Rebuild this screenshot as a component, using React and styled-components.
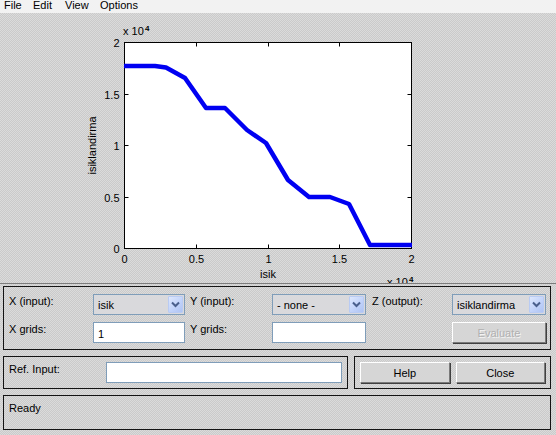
import React from "react";
import styled, { createGlobalStyle } from "styled-components";

const dither = "repeating-conic-gradient(#cacaca 0 25%, #dbdbdb 0 50%) 0 0 / 2px 2px";

const GlobalStyle = createGlobalStyle`
  html, body {
    margin: 0;
    padding: 0;
  }
  body {
    width: 556px;
    height: 435px;
    overflow: hidden;
    background: ${dither};
    font-family: "Liberation Sans", Arial, sans-serif;
    font-size: 11px;
    color: #000;
  }
`;

const Window = styled.div`
  width: 556px;
  height: 435px;
  display: flex;
  flex-direction: column;
  background: ${dither};
`;

const MenuBar = styled.div`
  height: 13px;
  flex: 0 0 13px;
  display: flex;
  align-items: flex-start;
  padding-left: 4px;
  background: #f2f2f2;
  line-height: 10px;
  overflow: hidden;
`;

const MenuItem = styled.span`
  width: ${(p) => (p.$w ? `${p.$w}px` : "auto")};
  white-space: nowrap;
`;

const PlotArea = styled.div`
  height: 270px;
  flex: 0 0 270px;
  overflow: hidden;
  svg {
    display: block;
  }
`;

const Divider = styled.div`
  height: 1px;
  flex: 0 0 1px;
  background: #7c7c7c;
  margin-bottom: 2px;
`;

const Frame = styled.div`
  border: 1px solid #141414;
  box-sizing: border-box;
`;

const ControlsFrame = styled(Frame)`
  margin: 0 5px 0 3px;
  display: grid;
  grid-template-columns: 89px 92px 87px 94px 86px 94px;
  grid-auto-rows: 21px;
  row-gap: 7px;
  padding: 7px 4px 6px 0;
`;

const Label = styled.div`
  padding-left: ${(p) => p.$pad ?? 5}px;
  line-height: 13px;
  padding-top: 1px;
  white-space: nowrap;
`;

const Select = styled.div`
  box-sizing: border-box;
  border: 1px solid #7f9db9;
  background: #d9d9dc;
  display: flex;
  align-items: center;
  padding: 1px;
`;

const SelectText = styled.span`
  flex: 1;
  padding-left: 3px;
  padding-top: 1px;
  white-space: nowrap;
  overflow: hidden;
`;

const ArrowButton = styled.span`
  width: 15px;
  height: 17px;
  box-sizing: border-box;
  border: 1px solid #b9cbf3;
  border-radius: 1px;
  background: linear-gradient(135deg, #dde7fd 0%, #c2d3fa 55%, #aec3f3 100%);
  display: flex;
  align-items: center;
  justify-content: center;
`;

const TextBox = styled.div`
  box-sizing: border-box;
  border: 1px solid #7f9db9;
  background: #ffffff;
  display: flex;
  align-items: center;
  padding: 2px 0 0 4px;
`;

const PushButton = styled.div`
  box-sizing: border-box;
  height: 21px;
  flex: ${(p) => (p.$grow ? 1 : "none")};
  display: flex;
  align-items: center;
  justify-content: center;
  background: #d6d6d6;
  border-top: 1px solid #ffffff;
  border-left: 1px solid #ffffff;
  border-right: 1px solid #7a7a7a;
  border-bottom: 1px solid #7a7a7a;
  box-shadow: 1px 1px 0 #404040;
  color: ${(p) => (p.$disabled ? "#b0b0b0" : "#000")};
  text-shadow: ${(p) => (p.$disabled ? "1px 1px 0 #f4f4f4" : "none")};
`;

const BottomRow = styled.div`
  display: flex;
  gap: 6px;
  margin: 6px 5px 0 3px;
`;

const RefFrame = styled(Frame)`
  width: 345px;
  flex: 0 0 345px;
  display: flex;
  padding: 5px 5px 5px 0;
`;

const RefLabel = styled.div`
  width: 102px;
  flex: 0 0 102px;
  padding-left: 5px;
  box-sizing: border-box;
  line-height: 13px;
  padding-top: 1px;
`;

const RefInput = styled(TextBox)`
  flex: 1;
  height: 21px;
`;

const ButtonFrame = styled(Frame)`
  flex: 1;
  display: flex;
  gap: 6px;
  padding: 5px 5px 5px 5px;
`;

const StatusFrame = styled(Frame)`
  height: 35px;
  margin: 6px 5px 0 3px;
  padding: 6px 5px;
  line-height: 13px;
`;

function Chevron() {
  return (
    <svg width="9" height="7" viewBox="0 0 9 7">
      <path d="M1 1.5 L4.5 5 L8 1.5" fill="none" stroke="#4a5f8c" strokeWidth="2" />
    </svg>
  );
}

function Dropdown({ value }) {
  return (
    <Select>
      <SelectText>{value}</SelectText>
      <ArrowButton>
        <Chevron />
      </ArrowButton>
    </Select>
  );
}

const X0 = 124.5;
const X1 = 411.5;
const Y0 = 248.5;
const Y1 = 42.5;
const ticks = [0, 0.5, 1, 1.5, 2];
const snap = (v) => Math.round(v - 0.5) + 0.5;
const xs = ticks.map((v) => snap(X0 + (v / 2) * (X1 - X0)));
const ys = ticks.map((v) => snap(Y0 - (v / 2) * (Y0 - Y1)));

const linePts = [
  [124, 66],
  [155, 66],
  [166, 67.5],
  [185, 78],
  [206, 108],
  [225, 108],
  [247, 130],
  [266, 143],
  [288, 180],
  [309, 197],
  [330, 197],
  [349, 204],
  [370, 245],
  [412, 245],
];

function Chart() {
  const font = { fontFamily: '"Liberation Sans", Arial, sans-serif', fontSize: 11 };
  return (
    <svg width="556" height="270" viewBox="0 0 556 270">
      <g transform="translate(0,-13)">
        <rect x={X0} y={Y1} width={X1 - X0} height={Y0 - Y1} fill="#fff" stroke="#000" strokeWidth="1" />
        {xs.map((x, i) => (
          <g key={`x${i}`}>
            <line x1={x} y1={Y0} x2={x} y2={Y0 - 4} stroke="#000" />
            <line x1={x} y1={Y1} x2={x} y2={Y1 + 4} stroke="#000" />
            <text x={x} y={263} textAnchor="middle" {...font}>
              {ticks[i]}
            </text>
          </g>
        ))}
        {ys.map((y, i) => (
          <g key={`y${i}`}>
            <line x1={X0} y1={y} x2={X0 + 4} y2={y} stroke="#000" />
            <line x1={X1} y1={y} x2={X1 - 4} y2={y} stroke="#000" />
            <text x={119.5} y={y + 4} textAnchor="end" {...font}>
              {ticks[i]}
            </text>
          </g>
        ))}
        <polyline
          points={linePts.map((p) => p.join(",")).join(" ")}
          fill="none"
          stroke="#0000f2"
          strokeWidth="4.5"
          strokeLinejoin="round"
        />
        <text x={123} y={35} {...font}>
          x 10
        </text>
        <text x={145} y={31} fontFamily='"Liberation Sans", Arial, sans-serif' fontSize="8" fontWeight="bold">
          4
        </text>
        <text x={387} y={286} {...font}>
          x 10
        </text>
        <text x={409} y={282} fontFamily='"Liberation Sans", Arial, sans-serif' fontSize="8" fontWeight="bold">
          4
        </text>
        <text x={268} y={278} textAnchor="middle" {...font}>
          isik
        </text>
        <text x={96} y={145.5} textAnchor="middle" transform="rotate(-90 96 145.5)" {...font}>
          isiklandirma
        </text>
      </g>
    </svg>
  );
}

export default function App() {
  return (
    <>
      <GlobalStyle />
      <Window>
        <MenuBar>
          <MenuItem $w={29}>File</MenuItem>
          <MenuItem $w={32}>Edit</MenuItem>
          <MenuItem $w={35}>View</MenuItem>
          <MenuItem>Options</MenuItem>
        </MenuBar>
        <PlotArea>
          <Chart />
        </PlotArea>
        <Divider />
        <ControlsFrame>
          <Label>X (input):</Label>
          <Dropdown value="isik" />
          <Label>Y (input):</Label>
          <Dropdown value="- none -" />
          <Label $pad={6}>Z (output):</Label>
          <Dropdown value="isiklandirma" />
          <Label>X grids:</Label>
          <TextBox>1</TextBox>
          <Label>Y grids:</Label>
          <TextBox />
          <div />
          <PushButton $disabled>Evaluate</PushButton>
        </ControlsFrame>
        <BottomRow>
          <RefFrame>
            <RefLabel>Ref. Input:</RefLabel>
            <RefInput />
          </RefFrame>
          <ButtonFrame>
            <PushButton $grow>Help</PushButton>
            <PushButton $grow>Close</PushButton>
          </ButtonFrame>
        </BottomRow>
        <StatusFrame>Ready</StatusFrame>
      </Window>
    </>
  );
}
